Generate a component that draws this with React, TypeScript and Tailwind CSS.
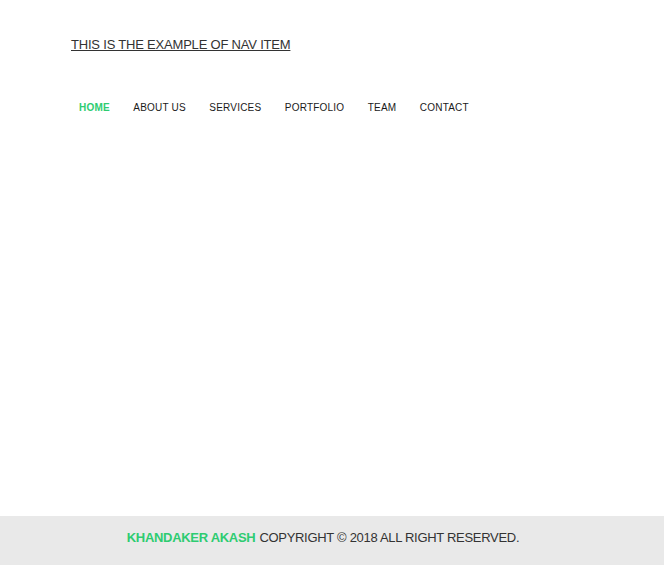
export default function App() {
  const items = ["HOME", "ABOUT US", "SERVICES", "PORTFOLIO", "TEAM", "CONTACT"]
  return (
    <div className="flex min-h-[565px] flex-col bg-white font-['Liberation_Sans',Arial,sans-serif] text-[#333]">
      <div className="flex-1 px-[71px] pt-[37px]">
        <h1 className="text-[13px] leading-4 tracking-[-0.2px] underline">THIS IS THE EXAMPLE OF NAV ITEM</h1>
        <ul className="mt-[49px] flex items-center pl-2">
          {items.map((item, i) => (
            <li
              key={item}
              className={`mr-[23.5px] text-[10px] leading-3 tracking-[0.2px] ${i === 0 ? "font-bold text-[#2ecc71]" : "text-[#1a1a1a]"}`}
            >
              {item}
            </li>
          ))}
        </ul>
      </div>
      <footer className="flex h-[49px] items-center justify-center bg-[#e9e9e9] pb-[6px] pr-[18px] text-[13px] tracking-[-0.3px]">
        <span className="font-bold text-[#2ecc71]">KHANDAKER AKASH</span>
        <span className="ml-1">COPYRIGHT © 2018 ALL RIGHT RESERVED.</span>
      </footer>
    </div>
  )
}
